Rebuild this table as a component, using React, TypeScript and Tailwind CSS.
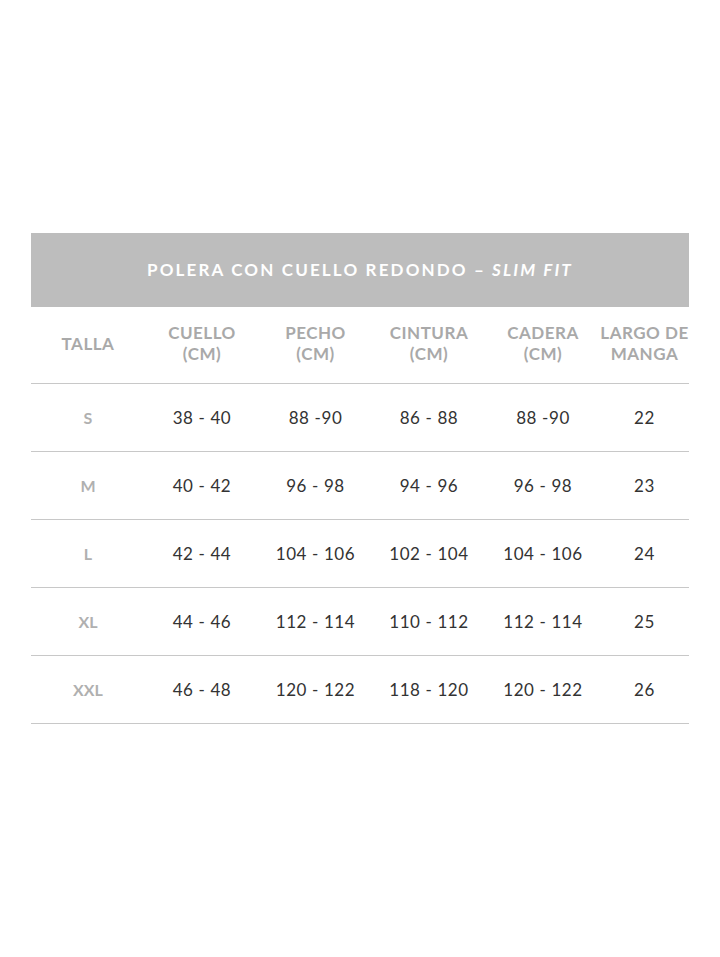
const headers: Array<[string, string?]> = [
  ['TALLA'],
  ['CUELLO', '(CM)'],
  ['PECHO', '(CM)'],
  ['CINTURA', '(CM)'],
  ['CADERA', '(CM)'],
  ['LARGO DE', 'MANGA'],
];

const rows = [
  ['S', '38 - 40', '88 -90', '86 - 88', '88 -90', '22'],
  ['M', '40 - 42', '96 - 98', '94 - 96', '96 - 98', '23'],
  ['L', '42 - 44', '104 - 106', '102 - 104', '104 - 106', '24'],
  ['XL', '44 - 46', '112 - 114', '110 - 112', '112 - 114', '25'],
  ['XXL', '46 - 48', '120 - 122', '118 - 120', '120 - 122', '26'],
];

const cols = 'grid grid-cols-[114px_114px_113px_114px_114px_89px]';

export default function App() {
  return (
    <div
      className="min-h-[957px] w-[720px] bg-white pt-[233px]"
      style={{ fontFamily: 'Lato, "Open Sans", sans-serif' }}
    >
      <div className="mx-[31px] w-[658px]">
        <div className="flex h-[74px] items-center justify-center bg-[#bdbdbd] text-[17px] font-bold tracking-[2.15px] text-white">
          POLERA CON CUELLO REDONDO – <span className="ml-[6px] italic">SLIM FIT</span>
        </div>

        <div className={`${cols} h-[77px] items-center border-b border-[#c8c8c8] pb-[4px]`}>
          {headers.map(([a, b]) => (
            <div
              key={a}
              className="whitespace-nowrap text-center text-[17px] font-bold leading-[21px] tracking-[0.5px] text-[#a9a9a9]"
            >
              <div>{a}</div>
              {b && <div>{b}</div>}
            </div>
          ))}
        </div>

        {rows.map((r) => (
          <div
            key={r[0]}
            className={`${cols} h-[68px] items-center border-b border-[#c8c8c8]`}
          >
            {r.map((c, i) =>
              i === 0 ? (
                <div key={i} className="text-center text-[16px] font-bold text-[#b0b0b0]">
                  {c}
                </div>
              ) : (
                <div
                  key={i}
                  className="text-center text-[17px] font-normal tracking-[0.6px] text-[#333333]"
                >
                  {c}
                </div>
              ),
            )}
          </div>
        ))}
      </div>
    </div>
  );
}
